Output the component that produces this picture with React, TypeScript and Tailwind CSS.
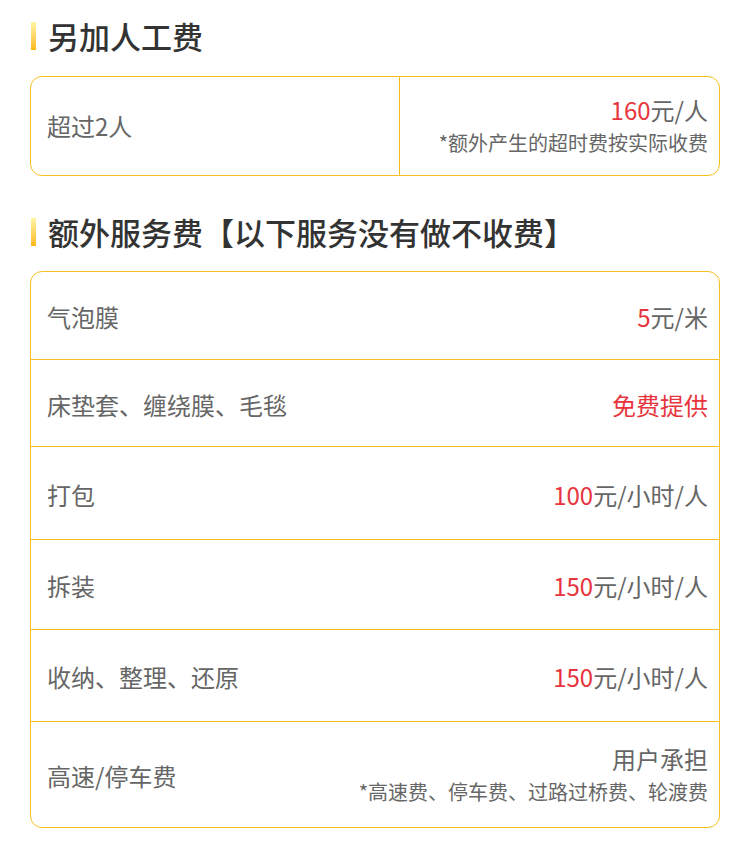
import React from "react";

const font = { fontFamily: '"Noto Sans CJK SC", "Noto Sans", sans-serif' };

type Row = {
  name: string;
  h: string;
  price?: string;
  unit?: string;
  note?: string;
  plain?: string;
};

const rows: Row[] = [
  { name: "气泡膜", h: "h-[87px]", price: "5", unit: "元/米" },
  { name: "床垫套、缠绕膜、毛毯", h: "h-[86px]", price: "免费提供", unit: "" },
  { name: "打包", h: "h-[92px]", price: "100", unit: "元/小时/人" },
  { name: "拆装", h: "h-[89px]", price: "150", unit: "元/小时/人" },
  { name: "收纳、整理、还原", h: "h-[91px]", price: "150", unit: "元/小时/人" },
  {
    name: "高速/停车费",
    h: "h-[105px]",
    plain: "用户承担",
    note: "*高速费、停车费、过路过桥费、轮渡费",
  },
];

// 섹션 제목 (왼쪽 노란 막대 포함)
const Title = ({ text }: { text: string }) => (
  <div className="flex items-center h-[36px]">
    <div className="w-[5px] h-[28px] ml-[1px] bg-gradient-to-b from-[#fff5a0] to-[#ffb800]" />
    <span className="ml-[12px] text-[31px] leading-[36px] font-medium text-[#333]">{text}</span>
  </div>
);

export default function App() {
  return (
    <div className="w-[750px] min-h-[854px] bg-white px-[30px] pt-[18px]" style={font}>
      <Title text="另加人工费" />

      <div className="mt-[22px] h-[100px] flex border border-[#f7bf1e] rounded-[12px]">
        <div className="w-[368px] flex items-center pl-[16px] text-[24px] text-[#666]">超过2人</div>
        <div className="w-px self-stretch bg-[#f5bb12]" />
        <div className="flex-1 flex flex-col items-end justify-center pr-[11px]">
          <div className="text-[24px] leading-[32px] text-[#666]">
            <span className="text-[#e8343c]">160</span>元/人
          </div>
          <div className="mt-[2px] text-[20px] leading-[30px] text-[#666]">*额外产生的超时费按实际收费</div>
        </div>
      </div>

      <div className="mt-[38px]">
        <Title text="额外服务费【以下服务没有做不收费】" />
      </div>

      <div className="mt-[21px] border border-[#f7bf1e] rounded-[12px] flex flex-col">
        {rows.map((r, i) => (
          <React.Fragment key={r.name}>
            <div className={`${r.h} flex items-center justify-between pl-[16px] pr-[11px]`}>
              <span className="text-[24px] text-[#666] pt-[3px]">{r.name}</span>
              {r.plain ? (
                <div className="flex flex-col items-end">
                  <div className="text-[24px] leading-[32px] text-[#666]">{r.plain}</div>
                  <div className="mt-[2px] text-[20px] leading-[30px] text-[#666]">{r.note}</div>
                </div>
              ) : (
                <span className="text-[24px] text-[#666] pt-[3px]">
                  <span className="text-[#e8343c]">{r.price}</span>
                  {r.unit}
                </span>
              )}
            </div>
            {i < rows.length - 1 && <div className="h-px bg-[#f7bf1e]" />}
          </React.Fragment>
        ))}
      </div>
    </div>
  );
}
